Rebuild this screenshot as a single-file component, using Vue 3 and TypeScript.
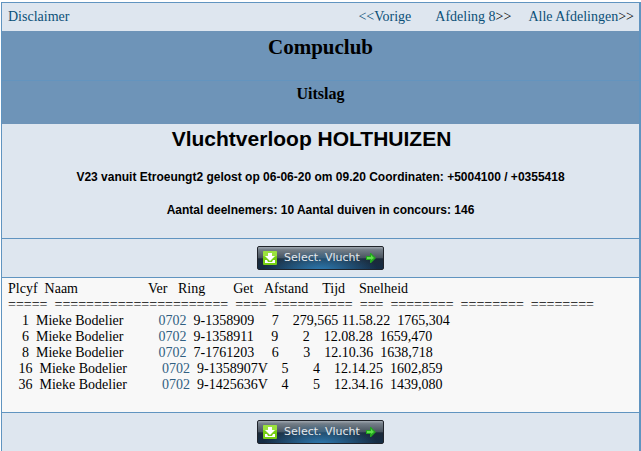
<script setup lang="ts">
interface Cell {
  text: string
  after: number
  href?: string
}

// Every cell is followed by a fixed number of blanks, as in a printed race list.
const pad = (count: number): string => ' '.repeat(count)

const headings: Cell[] = [
  { text: 'Plcyf', after: 2 },
  { text: 'Naam', after: 20 },
  { text: 'Ver', after: 3 },
  { text: 'Ring', after: 8 },
  { text: 'Get', after: 3 },
  { text: 'Afstand', after: 4 },
  { text: 'Tijd', after: 4 },
  { text: 'Snelheid', after: 0 },
]

const rules: string[] = [5, 22, 4, 10, 3, 8, 8, 8].map((n) => '='.repeat(n) + pad(2))

function result(
  place: string, ring: string, get: string, distance: string, time: string, speed: string,
  gaps: [number, number, number],
): Cell[] {
  return [
    { text: pad(5 - place.length) + place, after: 2 },
    { text: 'Mieke Bodelier', after: 10 },
    { text: '0702', after: 2, href: '#0702' },
    { text: ring, after: gaps[0] },
    { text: get, after: gaps[1] },
    { text: distance, after: gaps[2] },
    { text: time, after: 2 },
    { text: speed, after: 0 },
  ]
}

const rows: Cell[][] = [
  result('1', '9-1358909', '7', '279,565', '11.58.22', '1765,304', [5, 4, 1]),
  result('6', '9-1358911', '9', '2', '12.08.28', '1659,470', [5, 7, 4]),
  result('8', '7-1761203', '6', '3', '12.10.36', '1638,718', [5, 7, 4]),
  result('16', '9-1358907V', '5', '4', '12.14.25', '1602,859', [4, 7, 4]),
  result('36', '9-1425636V', '4', '5', '12.34.16', '1439,080', [4, 7, 4]),
]

const sections: string[] = ['top', 'bottom']
</script>

<template>
  <main class="page">
    <nav class="topbar">
      <a href="#disclaimer">Disclaimer</a>
      <div class="links">
        <a class="previous" href="#vorige">&lt;&lt;Vorige</a>
        <span><a href="#afdeling-8">Afdeling 8</a>&gt;&gt;</span>
        <span><a href="#afdelingen">Alle Afdelingen</a>&gt;&gt;</span>
      </div>
    </nav>
    <header class="banner">
      <h1>Compuclub</h1>
      <h2>Uitslag</h2>
    </header>
    <section class="flight">
      <h2>Vluchtverloop HOLTHUIZEN</h2>
      <p>V23 vanuit Etroeungt2 gelost op 06-06-20 om 09.20 Coordinaten: +5004100 / +0355418</p>
      <p>Aantal deelnemers: 10 Aantal duiven in concours: 146</p>
    </section>
    <template v-for="place in sections" :key="place">
      <div class="action">
        <button type="button" class="select">
          <svg class="download" viewBox="0 0 14 14" aria-hidden="true">
            <rect width="14" height="14" rx="1" fill="#76cf12" />
            <path d="M0 1q0-1 1-1h12q1 0 1 1v4Q7 8 0 5z" fill="#9be23e" />
            <path d="M5 2h4v3h3L7 10 2 5h3zM2 9h2l1 2h4l1-2h2v3H2z" fill="#fff" />
          </svg>
          <span>Select. Vlucht</span>
          <svg class="arrow" viewBox="0 0 10 10" aria-hidden="true">
            <path d="M0 3h4V0h1l5 5-5 5H4V7H0z" fill="#22a51f" />
            <path d="M1 4h4V2l3 3-3 2V6H1z" fill="#5fe04a" />
          </svg>
        </button>
      </div>
      <div v-if="place === 'top'" class="results">
        <table>
          <thead>
            <tr><th v-for="cell in headings" :key="cell.text" scope="col">{{ cell.text + pad(cell.after) }}</th></tr>
            <tr><td v-for="(rule, i) in rules" :key="i">{{ rule }}</td></tr>
          </thead>
          <tbody>
            <tr v-for="(row, r) in rows" :key="r"><td v-for="(cell, c) in row" :key="c"><a v-if="cell.href" :href="cell.href">{{ cell.text }}</a><template v-else>{{ cell.text }}</template>{{ pad(cell.after) }}</td></tr>
          </tbody>
        </table>
      </div>
    </template>
  </main>
</template>

<style>
body {
  background: #fff;
  overflow: hidden;
}
</style>

<style scoped>
.page {
  margin: 2px 0 0 1px;
  border: 1px solid #6094c0;
  border-right-width: 2px;
  border-bottom: 0;
  background: #dee6ef;
  color: #000;
  font: 14px/16px "Liberation Serif", serif;
}

a {
  color: #0b5078;
  text-decoration: none;
}

.topbar {
  display: flex;
  justify-content: space-between;
  padding: 6px 5px 6px 6px;
}

.links {
  display: flex;
  gap: 17px;
}

.previous {
  padding-right: 7px;
}

.banner {
  background: #6e94b8;
  text-align: center;
}

.banner h1 {
  margin: 0;
  padding: 4px 0 21px;
  border-bottom: 1px solid #6494be;
  font-size: 21px;
  line-height: 24px;
}

.banner h2 {
  margin: 0;
  padding: 4px 0 21px;
  font-size: 16px;
  line-height: 18px;
}

.flight {
  padding: 3px 0 20px;
  border-bottom: 1px solid #6094c0;
  font-family: "Liberation Sans", sans-serif;
  text-align: center;
}

.flight h2 {
  margin: 0 18px 18px 0;
  font-size: 21px;
  line-height: 24px;
}

.flight p {
  margin: 17px 0 0;
  font-size: 12px;
  font-weight: bold;
}

.flight h2 + p {
  margin-top: 0;
}

.action {
  display: flex;
  justify-content: center;
  padding: 7px 0;
}

.select {
  display: flex;
  align-items: center;
  box-sizing: border-box;
  height: 24px;
  padding: 0 7px 0 5px;
  border: 1px solid #20242b;
  border-radius: 2px;
  background:
    radial-gradient(ellipse at 50% 110%, #2f7db4 0, transparent 65%),
    linear-gradient(#a0a8b0 0, #747e88 12%, #4a5560 48%, #1c2a39 54%, #142c45 100%);
  color: #e4e9ed;
  font: 11px/22px "DejaVu Sans", sans-serif;
}

.download {
  width: 14px;
  height: 14px;
  margin-right: 7px;
}

.arrow {
  width: 10px;
  height: 10px;
  margin-left: 6px;
}

.results {
  padding: 3px 6px 19px;
  border: solid #6094c0;
  border-width: 1px 0;
  background: #f8f8f8;
}

table,
thead,
tbody,
tr {
  display: block;
}

th,
td {
  display: inline;
  padding: 0;
  font-weight: normal;
  vertical-align: baseline;
  white-space: pre;
}

td a {
  color: #315f82;
}
</style>
